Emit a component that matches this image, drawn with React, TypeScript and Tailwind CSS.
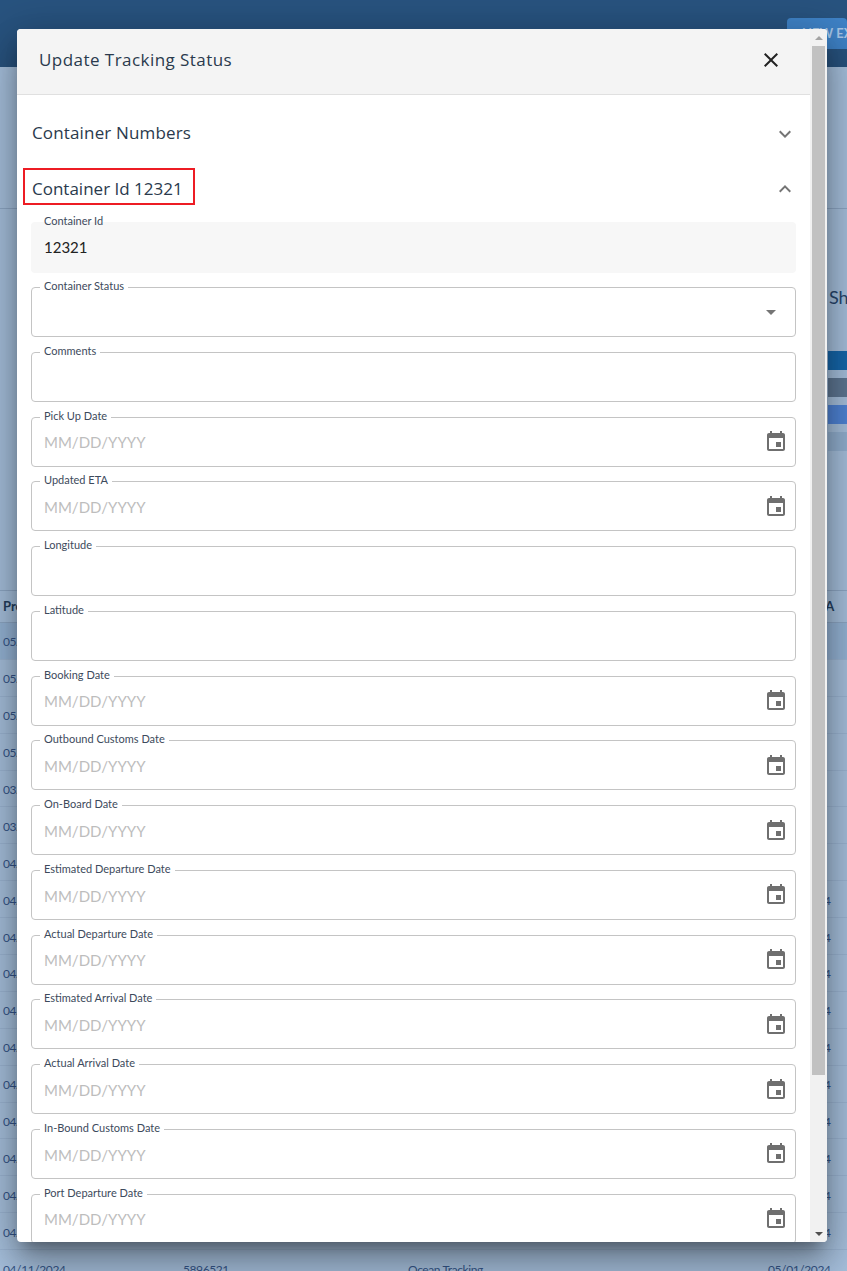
const dateFields = new Set([
  'Pick Up Date', 'Updated ETA', 'Booking Date', 'Outbound Customs Date', 'On-Board Date',
  'Estimated Departure Date', 'Actual Departure Date', 'Estimated Arrival Date', 'Actual Arrival Date',
  'In-Bound Customs Date', 'Port Departure Date',
])

const fields = [
  'Container Status', 'Comments', 'Pick Up Date', 'Updated ETA', 'Longitude', 'Latitude', 'Booking Date',
  'Outbound Customs Date', 'On-Board Date', 'Estimated Departure Date', 'Actual Departure Date',
  'Estimated Arrival Date', 'Actual Arrival Date', 'In-Bound Customs Date', 'Port Departure Date',
]

const rows = [
  ['05/06/2024', ''], ['05/06/2024', ''], ['05/03/2024', ''], ['05/03/2024', ''],
  ['03/28/2024', ''], ['03/28/2024', ''], ['04/11/2024', ''],
  ['04/11/2024', '05/01/2024'], ['04/11/2024', '05/01/2024'], ['04/11/2024', '05/01/2024'],
  ['04/11/2024', '05/01/2024'], ['04/11/2024', '05/01/2024'], ['04/11/2024', '05/01/2024'],
  ['04/11/2024', '05/01/2024'], ['04/11/2024', '05/01/2024'], ['04/11/2024', '05/01/2024'],
  ['04/11/2024', '05/01/2024'], ['04/11/2024', '05/01/2024'],
]

function Icon({ d, className }: { d: string; className: string }) {
  return (
    <svg viewBox="0 0 24 24" className={className} fill="currentColor">
      <path d={d} />
    </svg>
  )
}

const calendar = 'M17 12h-5v5h5v-5zM16 1v2H8V1H6v2H5c-1.11 0-1.99.9-1.99 2L3 19c0 1.1.89 2 2 2h14c1.1 0 2-.9 2-2V5c0-1.1-.9-2-2-2h-1V1h-2zm3 18H5V8h14v11z'

function Field({ label }: { label: string }) {
  const isDate = dateFields.has(label)
  return (
    <div className="relative flex h-[50px] shrink-0 items-center justify-between rounded border border-[#c4c4c4] pl-3 pr-[7px]">
      <span className="absolute -top-[9px] left-[8px] bg-white px-1 text-[11px] leading-[14px] text-[#3d4a5c]">{label}</span>
      <span className="pt-[2px] text-[15px] text-[#bdbdbd]">{isDate ? 'MM/DD/YYYY' : ''}</span>
      {isDate && <Icon d={calendar} className="mt-[1px] h-6 w-6 text-[#6f6f6f]" />}
      {label === 'Container Status' && <Icon d="M7 10l5 5 5-5z" className="mr-[5px] h-6 w-6 text-[#757575]" />}
    </div>
  )
}

export default function App() {
  return (
    <div className="relative h-[1271px] w-[847px] overflow-hidden bg-[#a8c2df] font-['Lato',sans-serif]">
      {/* page behind the dialog */}
      <div className="flex h-[67px] justify-end bg-[#28537f] pt-[18px]">
        <div className="h-[31px] w-[60px] overflow-hidden whitespace-nowrap rounded-t bg-[#3f83c8] pl-[15px] pt-[6px] text-[13px] font-bold text-[#a9c8e8]">NEW EXPORT</div>
      </div>
      <div className="h-[142px] border-b border-[#8fa9c7]" />
      <div className="flex h-[381px] flex-col items-end">
        <div className="w-[18px] overflow-hidden whitespace-nowrap pt-[76px] text-[18px] leading-6 text-[#27476e]">Shipments</div>
        <div className="mt-[42px] flex w-[19px] flex-col gap-[8px]">
          <div className="h-[19px] bg-[#1668ad]" />
          <div className="h-[19px] bg-[#5f7894]" />
          <div className="h-[19px] bg-[#5085d8]" />
          <div className="h-[19px] bg-[#94b2d2]" />
        </div>
      </div>
      <div className="grid h-[33px] grid-cols-[180px_225px_360px_1fr] items-center border-y border-[#8fa9c7] pl-[3px] text-[13px] font-bold text-[#24405f]">
        <div>Pre Alert</div><div>Ref</div><div>Type</div><div className="pl-[43px]">ETA</div>
      </div>
      {rows.map(([date, eta], i) => (
        <div
          key={i}
          className={`grid h-[36.9px] grid-cols-[180px_225px_360px_1fr] items-center border-b border-[#9db7d5] pl-[3px] pt-[3px] text-xs tracking-[-0.4px] text-[#35568a] ${i === 0 ? 'bg-[#97b6d8]' : ''}`}
        >
          <div>{date}</div>
          <div>5896521</div>
          <div>Ocean Tracking</div>
          <div>{eta}</div>
        </div>
      ))}

      {/* dialog */}
      <div className="absolute left-[17px] top-[29px] flex h-[1213px] w-[810px] flex-col overflow-hidden rounded bg-white shadow-[0_11px_15px_-7px_rgba(0,0,0,0.35),0_24px_38px_3px_rgba(0,0,0,0.2),0_9px_46px_8px_rgba(0,0,0,0.2)]">
        <div className="flex h-[66px] shrink-0 items-center justify-between border-b border-[#e0e0e0] bg-[#f4f4f4] pb-[3px] pl-[22px] pr-[44px] font-['Open_Sans',sans-serif] text-[17px] tracking-[0.45px] text-[#2a3a4d]">
          <span>Update Tracking Status</span>
          <Icon d="M19 6.41 17.59 5 12 10.59 6.41 5 5 6.41 10.59 12 5 17.59 6.41 19 12 13.41 17.59 19 19 17.59 13.41 12z" className="h-6 w-6 text-[#222222]" />
        </div>
        <div className="flex flex-col pl-[14px] pr-[31px]">
          <div className="flex h-[76px] shrink-0 items-center justify-between pl-[1px] font-['Open_Sans',sans-serif] text-[17px] tracking-[0.15px] text-[#2a3a4d]">
            <span>Container Numbers</span>
            <Icon d="M16.59 8.59 12 13.17 7.41 8.59 6 10l6 6 6-6z" className="-mr-[1px] mt-[2px] h-6 w-6 text-[#757575]" />
          </div>
          <div className="-mt-[3px] flex h-[37px] shrink-0 items-center justify-between">
            <span className="-ml-[8px] flex h-[37px] items-center border-2 border-[#ed1c24] pl-[7px] pr-[10px] pt-[5px] font-['Open_Sans',sans-serif] text-[17px] text-[#2a3a4d]">Container Id 12321</span>
            <Icon d="m12 8-6 6 1.41 1.41L12 10.83l4.59 4.58L18 14z" className="-mr-[1px] mt-[5px] h-6 w-6 text-[#757575]" />
          </div>
          <div className="mt-[17px] flex flex-col gap-[14.75px]">
            <div className="relative -mb-[0.75px] flex h-[51px] shrink-0 items-center rounded bg-[#f7f7f7] pl-[13px]">
              <span className="absolute -top-[8px] left-[13px] text-[11px] leading-[14px] text-[#3d4a5c]">Container Id</span>
              <span className="text-[15px] text-[#222222]">12321</span>
            </div>
            {fields.map(label => <Field key={label} label={label} />)}
          </div>
        </div>
        {/* scrollbar */}
        <div className="absolute bottom-0 right-0 top-0 flex w-[17px] flex-col items-center bg-[#f1f1f1]">
          <div className="flex h-[17px] w-full items-center justify-center">
            <div className="h-0 w-0 border-x-[4px] border-b-[4px] border-x-transparent border-b-[#a3a3a3]" />
          </div>
          <div className="h-[1029px] w-[13px] bg-[#c1c1c1]" />
          <div className="mt-auto flex h-[17px] w-full items-center justify-center">
            <div className="h-0 w-0 border-x-[4px] border-t-[4px] border-x-transparent border-t-[#505050]" />
          </div>
        </div>
      </div>
    </div>
  )
}
